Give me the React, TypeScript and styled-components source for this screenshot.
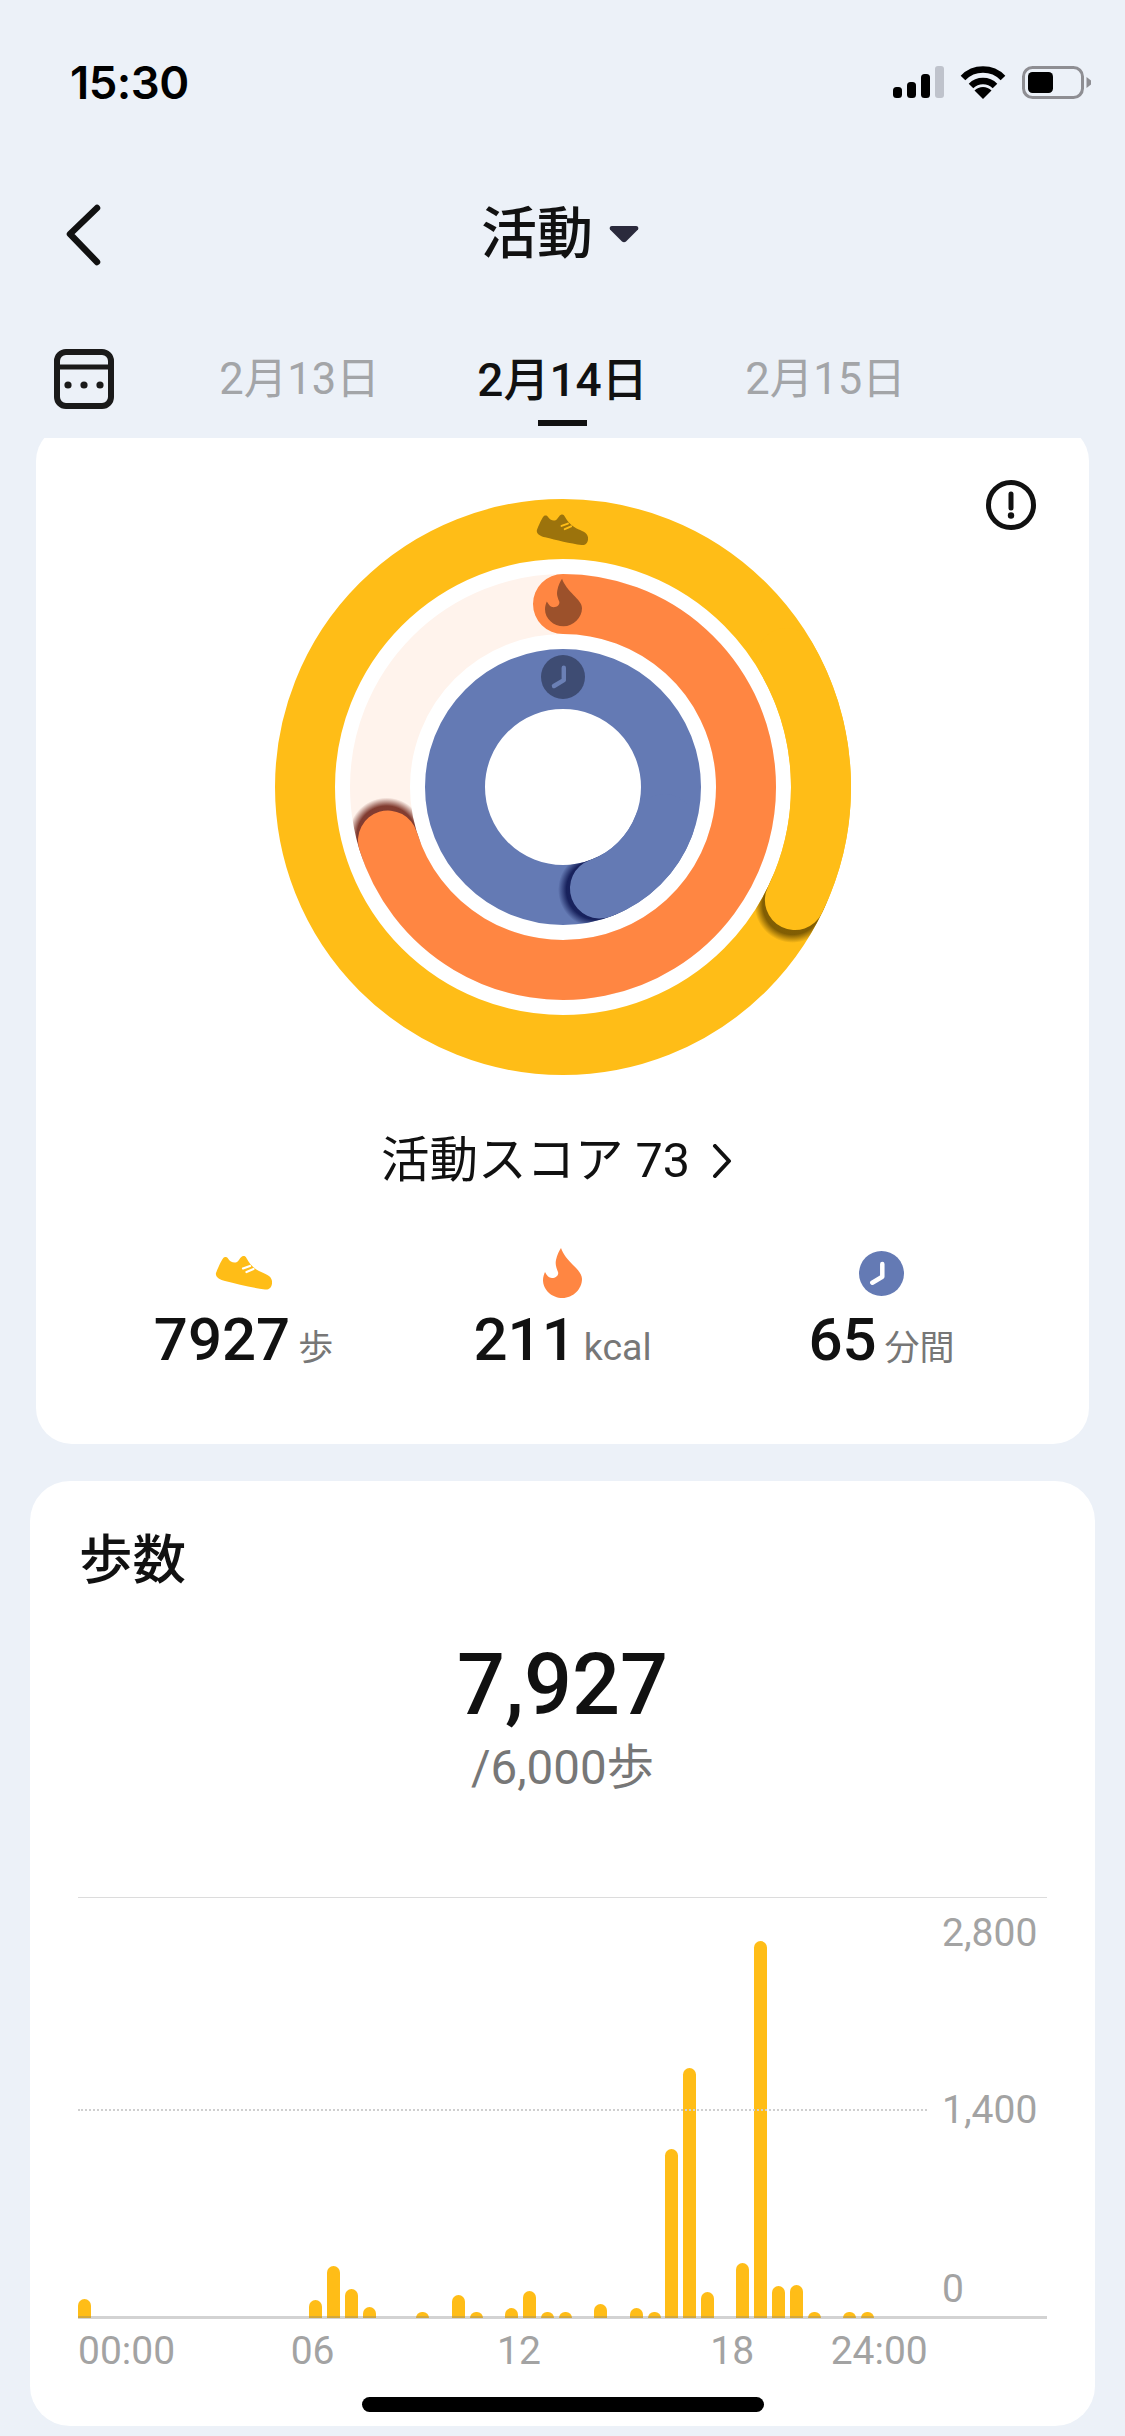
import React from "react";
import styled, { createGlobalStyle } from "styled-components";

const GlobalStyle = createGlobalStyle`
  html, body { margin: 0; padding: 0; background: #ecf1f8; }
  * { box-sizing: border-box; }
`;

const FONT = `Roboto, "Noto Sans CJK JP", sans-serif`;
const YELLOW = "#ffbd17";
const ORANGE = "#ff8642";
const BLUE = "#647ab4";

const Page = styled.div`
  position: relative;
  width: 1125px;
  height: 2436px;
  overflow: hidden;
  background: #ecf1f8;
  font-family: ${FONT};
  color: #111;
`;

const StatusBar = styled.div`
  height: 164px;
  padding: 0 34px 0 70px;
  display: flex;
  align-items: center;
  justify-content: space-between;
`;

const Time = styled.div`
  margin-top: 2px;
  font-family: Inter, sans-serif;
  font-size: 45.5px;
  font-weight: 600;
  line-height: 50px;
  letter-spacing: -0.5px;
  color: #000;
`;

const StatusIcons = styled.div`
  display: flex;
  align-items: center;
  gap: 16px;
`;

const NavBar = styled.div`
  height: 140px;
  padding: 0 69px 0 64px;
  display: grid;
  grid-template-columns: 1fr auto 1fr;
  align-items: center;
`;

const TitleGroup = styled.div`
  display: flex;
  align-items: center;
  gap: 16px;
`;

const Title = styled.h1`
  margin: 0;
  font-size: 56px;
  font-weight: 500;
  line-height: 64px;
  color: #111;
`;

const DateRow = styled.div`
  height: 134px;
  padding: 45px 0 0 54px;
  display: flex;
  align-items: flex-start;
  gap: 54px;
`;

const DateTabs = styled.div`
  display: grid;
  grid-template-columns: repeat(3, 263px);
`;

const DateTab = styled.div`
  display: flex;
  flex-direction: column;
  align-items: center;
`;

const DateText = styled.span<{ $active?: boolean }>`
  margin-top: 1px;
  height: 59px;
  font-size: ${(p) => (p.$active ? "46px" : "43.5px")};
  font-weight: ${(p) => (p.$active ? 500 : 400)};
  line-height: 60px;
  color: ${(p) => (p.$active ? "#111" : "#a3a5a8")};
`;

const Underline = styled.div<{ $active?: boolean }>`
  width: 49px;
  height: 6px;
  margin-top: 11px;
  background: ${(p) => (p.$active ? "#111" : "transparent")};
`;

const ScrollArea = styled.div`
  overflow: hidden;
  height: 1998px;
`;

const ActivityCard = styled.section`
  position: relative;
  height: 1019px;
  margin: -13px 36px 0;
  padding-top: 74px;
  border-radius: 36px;
  background: #fff;
  display: flex;
  flex-direction: column;
  align-items: center;
`;

const InfoButton = styled.div`
  position: absolute;
  top: 55px;
  right: 53px;
  width: 50px;
  height: 50px;
`;

const ScoreRow = styled.div`
  margin-top: 61px;
  height: 50px;
  display: flex;
  align-items: center;
  gap: 22px;
  padding-right: 12px;
  font-size: 48.5px;
  font-weight: 400;
  line-height: 50px;
  color: #111;
`;

const Stats = styled.div`
  margin-top: 62px;
  display: grid;
  grid-template-columns: repeat(3, 319px);
`;

const Stat = styled.div`
  display: flex;
  flex-direction: column;
  align-items: center;
  gap: 12px;
`;

const StatIcon = styled.div`
  height: 50px;
  display: flex;
  align-items: center;
  justify-content: center;
`;

const StatValue = styled.div`
  display: flex;
  align-items: baseline;
  gap: 8px;
  line-height: 60px;
`;

const StatNumber = styled.span`
  font-size: 60px;
  font-weight: 500;
  color: #111;
`;

const StatUnit = styled.span<{ $latin?: boolean }>`
  font-size: ${(p) => (p.$latin ? "37.5px" : "35px")};
  font-weight: 400;
  color: #777;
`;

const StepsCard = styled.section`
  position: relative;
  height: 945px;
  margin: 37px 30px 0;
  padding: 50px 48px 0;
  border-radius: 40px;
  background: #fff;
`;

const CardTitle = styled.h2`
  margin: 0;
  padding-left: 1px;
  font-size: 53.5px;
  font-weight: 500;
  line-height: 60px;
  color: #111;
`;

const BigNumber = styled.div`
  margin-top: 45px;
  text-align: center;
  font-size: 84.5px;
  font-weight: 500;
  line-height: 100px;
  color: #111;
`;

const Goal = styled.div`
  margin-top: 7px;
  text-align: center;
  font-size: 47.5px;
  font-weight: 400;
  line-height: 50px;
  color: #777;
`;

const Plot = styled.div`
  position: relative;
  margin-top: 104px;
  height: 421px;
  border-top: 1px solid #dcdcdc;
`;

const Bars = styled.div`
  height: 100%;
  display: grid;
  grid-template-columns: repeat(48, 17.8px);
  align-items: end;
`;

const Bar = styled.div`
  width: 13px;
  border-radius: 6.5px 6.5px 0 0;
  background: ${YELLOW};
`;

const DottedLine = styled.div`
  position: absolute;
  left: 0;
  top: 211px;
  width: 849px;
  border-top: 2px dotted #cfcfcf;
`;

const BaseLine = styled.div`
  position: absolute;
  left: 0;
  right: 0;
  bottom: -1px;
  height: 3px;
  background: rgba(130, 130, 130, 0.35);
`;

const YLabel = styled.span<{ $top: number }>`
  position: absolute;
  left: 864px;
  top: ${(p) => p.$top}px;
  font-size: 39px;
  line-height: 40px;
  color: #a3a3a3;
`;

const XAxis = styled.div`
  margin-top: 13px;
  display: flex;
`;

const XLabel = styled.span<{ $offset: number }>`
  margin-left: ${(p) => p.$offset}px;
  font-size: 39px;
  line-height: 40px;
  color: #a3a3a3;
`;

const HomeIndicator = styled.div`
  position: absolute;
  left: 362px;
  bottom: 24px;
  width: 402px;
  height: 15px;
  border-radius: 8px;
  background: #000;
`;

const SHOE =
  "M1 17C3 12 6 5 8 2.5C9 .5 12 .5 13 2.5C15 6 19 7.5 22 6C24 5 25 1 28 0C30 -.5 31 1 32 3C34 7 38 12 44 15C50 18 56 19 57 25C57.5 30 55 34 50 33.5C38 32 22 28 10 25C5 24 0 21 1 17Z";
const FLAME =
  "M18 0C20 6 25 12 30 17C35 22 39 26 39 31C39 41 30 50 19.5 50C9 50 0 42 0 32C0 29 1 26 2 24C3.5 27 6 30 9 30C13 30 16 27 15 24C13.5 20 12 17 13 12C14 7 16 3 18 0Z";

const ShoeArt = ({ fill, lace }: { fill: string; lace: string }) => (
  <>
    <path d={SHOE} fill={fill} />
    <path d="M28 12.5L35 10M31.5 16L38.5 13" stroke={lace} strokeWidth="2.2" strokeLinecap="round" fill="none" />
  </>
);

const ClockArt = ({ fill, hand }: { fill: string; hand: string }) => (
  <>
    <circle cx="22.5" cy="22.5" r="22.5" fill={fill} />
    <path d="M23.3 13V25.7L13.3 31.7" stroke={hand} strokeWidth="4.5" strokeLinecap="round" strokeLinejoin="round" fill="none" />
  </>
);

const C = 288;
const polar = (r: number, deg: number) => {
  const a = ((deg - 90) * Math.PI) / 180;
  return { x: C + r * Math.cos(a), y: C + r * Math.sin(a) };
};
const arc = (r: number, from: number, to: number) => {
  const s = polar(r, from);
  const e = polar(r, to);
  const large = to - from > 180 ? 1 : 0;
  return `M${s.x} ${s.y}A${r} ${r} 0 ${large} 1 ${e.x} ${e.y}`;
};
const annulus = (r: number) => {
  const o = r + 30;
  const i = r - 30;
  return `M${C - o} ${C}a${o} ${o} 0 1 0 ${2 * o} 0a${o} ${o} 0 1 0 ${-2 * o} 0Z M${C - i} ${C}a${i} ${i} 0 1 0 ${2 * i} 0a${i} ${i} 0 1 0 ${-2 * i} 0Z`;
};

const rings = [
  { id: "steps", r: 258, color: YELLOW, track: YELLOW, from: 60, to: 116, shadow: "#6b4d00", lead: 1.2, opacity: 0.85 },
  { id: "cal", r: 183, color: ORANGE, track: "#fff3ec", from: 0, to: 253, shadow: "#6b1c10", lead: 1.6, opacity: 0.85 },
  { id: "time", r: 108, color: BLUE, track: BLUE, from: 110, to: 160, shadow: "#141d58", lead: 2.2, opacity: 0.95 },
];

const ActivityRings = () => (
  <svg width="576" height="576" viewBox="0 0 576 576">
    <defs>
      {rings.map((ring) => (
        <React.Fragment key={ring.id}>
          <clipPath id={`band-${ring.id}`}>
            <path d={annulus(ring.r)} clipRule="evenodd" />
          </clipPath>
          <radialGradient id={`glow-${ring.id}`}>
            <stop offset="0.78" stopColor={ring.shadow} stopOpacity={ring.opacity} />
            <stop offset="1" stopColor={ring.shadow} stopOpacity="0" />
          </radialGradient>
        </React.Fragment>
      ))}
    </defs>
    {rings.map((ring) => {
      const p = polar(ring.r, ring.to + ring.lead);
      return (
        <g key={ring.id}>
          <circle cx={C} cy={C} r={ring.r} fill="none" stroke={ring.track} strokeWidth="60" />
          <circle cx={p.x} cy={p.y} r="38" fill={`url(#glow-${ring.id})`} clipPath={`url(#band-${ring.id})`} />
          <path d={arc(ring.r, ring.from, ring.to)} fill="none" stroke={ring.color} strokeWidth="60" strokeLinecap="round" />
        </g>
      );
    })}
    <svg x="261" y="15" width="52" height="32" viewBox="0 0 57 34">
      <ShoeArt fill="#9c730c" lace={YELLOW} />
    </svg>
    <svg x="270" y="79" width="37" height="49" viewBox="0 0 39 50">
      <path d={FLAME} fill="#9c512b" />
    </svg>
    <svg x="266" y="156" width="44" height="44" viewBox="0 0 45 45">
      <ClockArt fill="#3e4c73" hand="#6b80b5" />
    </svg>
  </svg>
);

const barData: Record<number, number> = {
  0: 19.5, 13: 18, 14: 52, 15: 29, 16: 11, 19: 6, 21: 23, 22: 6, 24: 10, 25: 27.5, 26: 6, 27: 6, 29: 14,
  31: 10, 32: 6, 33: 169, 34: 250, 35: 26, 37: 55, 38: 377, 39: 32, 40: 33, 41: 6, 43: 6, 44: 6,
};
const slots = Array.from({ length: 48 }, (_, i) => barData[i] ?? 0);

const xLabels = [
  { text: "00:00", offset: 0 },
  { text: "06", offset: 115.5 },
  { text: "12", offset: 162.5 },
  { text: "18", offset: 169.5 },
  { text: "24:00", offset: 76.5 },
];

export default function App() {
  return (
    <Page>
      <GlobalStyle />
      <StatusBar>
        <Time>15:30</Time>
        <StatusIcons>
          <svg width="51" height="32" viewBox="0 0 51 32">
            <rect x="0" y="21" width="9" height="11" rx="3.5" fill="#000" />
            <rect x="14" y="16" width="9" height="16" rx="3.5" fill="#000" />
            <rect x="28" y="8" width="9" height="24" rx="3.5" fill="#000" />
            <rect x="42" y="0" width="9" height="32" rx="3" fill="#bfc3cc" />
          </svg>
          <svg width="46" height="33" viewBox="0 0 46 33">
            <path d="M3 12A28 28 0 0 1 43 12" stroke="#000" strokeWidth="6.5" fill="none" />
            <path d="M11 20A17 17 0 0 1 35 20" stroke="#000" strokeWidth="6.5" fill="none" />
            <path d="M23 33L14.5 24.5A12 12 0 0 1 31.5 24.5Z" fill="#000" />
          </svg>
          <svg width="69" height="33" viewBox="0 0 69 33">
            <rect x="1.5" y="1.5" width="59" height="30" rx="9" fill="none" stroke="#8e8e93" strokeWidth="3" />
            <rect x="6" y="6" width="25" height="21" rx="4.5" fill="#000" />
            <path d="M64.5 11L69 14.5V18.5L64.5 22Z" fill="#8e8e93" />
          </svg>
        </StatusIcons>
      </StatusBar>

      <NavBar>
        <svg width="40" height="64" viewBox="0 0 40 64">
          <path d="M33 6L6 32L33 60" fill="none" stroke="#111" strokeWidth="6.5" strokeLinecap="round" strokeLinejoin="round" />
        </svg>
        <TitleGroup>
          <Title>活動</Title>
          <svg width="30" height="18" viewBox="0 0 30 18">
            <path d="M3 1H27C29 1 30 3 29 4.5L17 16.5C16 17.5 14 17.5 13 16.5L1 4.5C0 3 1 1 3 1Z" fill="#2a2a3c" />
          </svg>
        </TitleGroup>
      </NavBar>

      <DateRow>
        <svg width="60" height="60" viewBox="0 0 60 60">
          <rect x="3" y="3" width="54" height="54" rx="9" fill="none" stroke="#1a1a1a" strokeWidth="6" />
          <path d="M3 18H57" stroke="#1a1a1a" strokeWidth="5" />
          <circle cx="14" cy="36" r="3.6" fill="#1a1a1a" />
          <circle cx="30" cy="36" r="3.6" fill="#1a1a1a" />
          <circle cx="46" cy="36" r="3.6" fill="#1a1a1a" />
        </svg>
        <DateTabs>
          <DateTab>
            <DateText>2月13日</DateText>
            <Underline />
          </DateTab>
          <DateTab>
            <DateText $active>2月14日</DateText>
            <Underline $active />
          </DateTab>
          <DateTab>
            <DateText>2月15日</DateText>
            <Underline />
          </DateTab>
        </DateTabs>
      </DateRow>

      <ScrollArea>
        <ActivityCard>
          <InfoButton>
            <svg width="50" height="50" viewBox="0 0 50 50">
              <circle cx="25" cy="25" r="22.5" fill="none" stroke="#111" strokeWidth="5" />
              <path d="M25 14V28" stroke="#111" strokeWidth="5" strokeLinecap="round" />
              <circle cx="25" cy="35.5" r="3.2" fill="#111" />
            </svg>
          </InfoButton>
          <ActivityRings />
          <ScoreRow>
            <span>活動スコア 73</span>
            <svg width="20" height="34" viewBox="0 0 20 34">
              <path d="M3 2L17 17L3 32" fill="none" stroke="#111" strokeWidth="4" strokeLinecap="round" strokeLinejoin="round" />
            </svg>
          </ScoreRow>
          <Stats>
            <Stat>
              <StatIcon>
                <svg width="57" height="34" viewBox="0 0 57 34">
                  <ShoeArt fill={YELLOW} lace="#fff" />
                </svg>
              </StatIcon>
              <StatValue>
                <StatNumber>7927</StatNumber>
                <StatUnit>歩</StatUnit>
              </StatValue>
            </Stat>
            <Stat>
              <StatIcon>
                <svg width="39" height="50" viewBox="0 0 39 50">
                  <path d={FLAME} fill={ORANGE} />
                </svg>
              </StatIcon>
              <StatValue>
                <StatNumber>211</StatNumber>
                <StatUnit $latin>kcal</StatUnit>
              </StatValue>
            </Stat>
            <Stat>
              <StatIcon>
                <svg width="45" height="45" viewBox="0 0 45 45">
                  <ClockArt fill={BLUE} hand="#fff" />
                </svg>
              </StatIcon>
              <StatValue>
                <StatNumber>65</StatNumber>
                <StatUnit>分間</StatUnit>
              </StatValue>
            </Stat>
          </Stats>
        </ActivityCard>

        <StepsCard>
          <CardTitle>歩数</CardTitle>
          <BigNumber>7,927</BigNumber>
          <Goal>/6,000歩</Goal>
          <Plot>
            <DottedLine />
            <Bars>
              {slots.map((h, i) => (
                <Bar key={i} style={{ height: h }} />
              ))}
            </Bars>
            <BaseLine />
            <YLabel $top={15}>2,800</YLabel>
            <YLabel $top={192}>1,400</YLabel>
            <YLabel $top={371}>0</YLabel>
          </Plot>
          <XAxis>
            {xLabels.map((l) => (
              <XLabel key={l.text} $offset={l.offset}>
                {l.text}
              </XLabel>
            ))}
          </XAxis>
        </StepsCard>
      </ScrollArea>
      <HomeIndicator />
    </Page>
  );
}
